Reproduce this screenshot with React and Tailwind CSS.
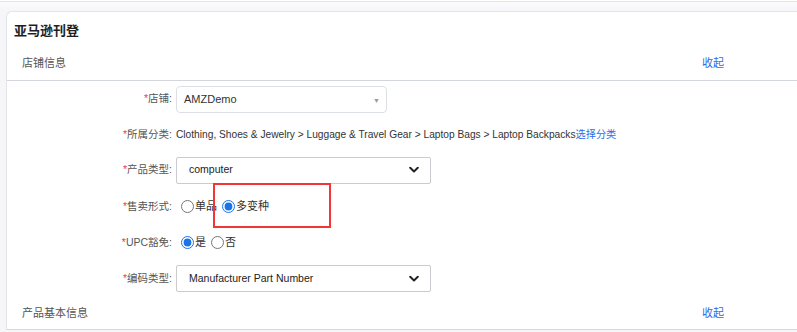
import React from 'react';

const font = { fontFamily: '"Liberation Sans", "Noto Sans CJK SC", sans-serif' };

const Label = ({ children }) => (
  <div className="w-[169px] shrink-0 text-right text-[10.5px] text-[#555] pr-[4px]">
    <span className="text-[#f03c3c]">*</span>
    {children}:
  </div>
);

const Chevron = () => (
  <svg width="10" height="7" viewBox="0 0 10 7" className="absolute right-[11px] top-1/2 -translate-y-1/2">
    <path d="M1.2 1.3 L5 5 L8.8 1.3" fill="none" stroke="#222" strokeWidth="2" strokeLinecap="round" strokeLinejoin="round" />
  </svg>
);

const NativeSelect = ({ value }) => (
  <div className="relative w-[255px] h-[27px] border border-[#c9cbd0] rounded-[2px] bg-white flex items-center pl-[12px] text-[10.5px] text-[#222]">
    {value}
    <Chevron />
  </div>
);

const Radio = ({ checked, label }) => (
  <label className="flex items-center">
    <input type="radio" readOnly checked={checked} className="ml-[5px] mr-[1px] w-[13px] h-[13px] accent-[#1a73e8]" />
    <span className="text-[11px] text-[#333]">{label}</span>
  </label>
);

const SectionHeader = ({ title, className = '' }) => (
  <div className={`flex items-center justify-between pl-[15px] pr-[73px] border-b border-[#d3d6de] ${className}`}>
    <span className="text-[11px] text-[#555]">{title}</span>
    <span className="text-[11px] text-[#2a6de8]">收起</span>
  </div>
);

export default function App() {
  return (
    <div style={font} className="w-[797px] h-[332px] overflow-hidden bg-[#f6f6f8]">
      <div className="h-[1px] bg-white" />
      <div className="h-[10px] border-t border-[#e6e6e8] bg-gradient-to-b from-[#fbfbfc] to-[#f6f6f8]" />
      <div className="ml-[6px] bg-white border-l border-t border-[#e3e4ea] rounded-tl-[6px]">
        <div className="pl-[7px] pt-[9px] h-[34px] text-[13px] font-bold text-[#1f1f1f]">亚马逊刊登</div>
        <SectionHeader title="店铺信息" className="h-[35px]" />

        <div className="flex items-center h-[36px]">
          <Label>店铺</Label>
          <div className="relative w-[211px] h-[27px] border border-[#dcdfe6] rounded-[4px] flex items-center pl-[7px] text-[11px] text-[#333]">
            AMZDemo
            <span className="absolute right-[6px] top-[9px] text-[7px] text-[#999]">▼</span>
          </div>
        </div>

        <div className="flex items-center h-[35px]">
          <Label>所属分类</Label>
          <div className="text-[10.2px] text-[#333] whitespace-nowrap">
            Clothing, Shoes &amp; Jewelry &gt; Luggage &amp; Travel Gear &gt; Laptop Bags &gt; Laptop Backpacks
            <span className="text-[#2a6de8]">选择分类</span>
          </div>
        </div>

        <div className="flex items-center h-[36px]">
          <Label>产品类型</Label>
          <NativeSelect value="computer" />
        </div>

        <div className="flex items-center h-[37px]">
          <Label>售卖形式</Label>
          <div className="relative flex items-center">
            <Radio checked={false} label="单品" />
            <Radio checked label="多变种" />
            <div className="absolute left-[37px] top-[-15px] w-[118px] h-[45px] border-2 border-[#f23535]" />
          </div>
        </div>

        <div className="flex items-center h-[35px]">
          <Label>UPC豁免</Label>
          <Radio checked label="是" />
          <Radio checked={false} label="否" />
        </div>

        <div className="flex items-center h-[37px]">
          <Label>编码类型</Label>
          <NativeSelect value="Manufacturer Part Number" />
        </div>

        <SectionHeader title="产品基本信息" className="h-[33px]" />
      </div>
    </div>
  );
}
